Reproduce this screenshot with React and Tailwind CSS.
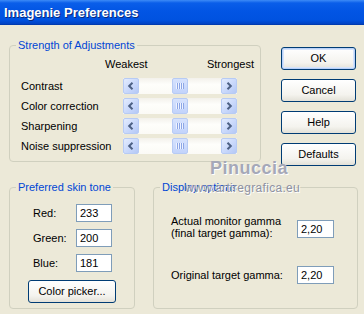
import React from "react";

function Arrow({ dir }) {
  return (
    <div className="w-[16px] h-[16px] rounded-[2px] border border-[#B7CBF4] bg-[linear-gradient(135deg,#E3ECFE_0%,#C6D6FB_60%,#B4C8F5_100%)] flex items-center justify-center">
      <svg width="8" height="8" viewBox="0 0 8 8">
        <path
          d={dir === "left" ? "M5.5 0.8 L2.2 4 L5.5 7.2" : "M2.5 0.8 L5.8 4 L2.5 7.2"}
          stroke="#4D6185"
          strokeWidth="2"
          fill="none"
        />
      </svg>
    </div>
  );
}

function Thumb() {
  return (
    <div className="w-[16px] h-[16px] rounded-[2px] border border-[#B7CBF4] bg-[linear-gradient(to_bottom,#D6E2FD,#C2D3FB)] flex items-center justify-center">
      <svg width="8" height="8" viewBox="0 0 8 8">
        <path d="M0.5 1 V7 M2.5 1 V7 M4.5 1 V7 M6.5 1 V7" stroke="#EEF3FF" strokeWidth="1" />
        <path d="M1.5 1 V7 M3.5 1 V7 M5.5 1 V7 M7.5 1 V7" stroke="#8CA6E6" strokeWidth="1" />
      </svg>
    </div>
  );
}

function Scroll() {
  return (
    <div className="w-[114px] h-[16px] flex justify-between bg-[linear-gradient(to_bottom,#F3F1EB,#FEFEFB_40%,#FBFAF6)]">
      <Arrow dir="left" />
      <Thumb />
      <Arrow dir="right" />
    </div>
  );
}

function Button({ children, def, className = "" }) {
  return (
    <div
      className={
        "h-[23px] rounded-[3px] border border-[#003C74] bg-[linear-gradient(to_bottom,#FFFFFF,#F4F3EE_70%,#E3E1D8)] flex items-center justify-center text-[11px] text-black " +
        (def ? "shadow-[inset_0_0_0_1px_#B9D1F8,inset_0_0_0_2px_#D6E4FB] " : "") +
        className
      }
    >
      {children}
    </div>
  );
}

function Input({ value, w = "w-[36px]" }) {
  return (
    <div className={w + " h-[18px] border border-[#7F9DB9] bg-white pl-[3px] flex items-center text-[11px] text-black"}>
      {value}
    </div>
  );
}

const fieldset = "border border-[#D0D0BF] rounded-[4px] m-0 p-0 min-w-0";
const legend = "ml-[6px] px-[2px] text-[11px] leading-[12px] text-[#0046D5]";

export default function App() {
  return (
    <div className="relative w-[364px] h-[314px] overflow-hidden bg-[#ECE9D8] font-['Liberation_Sans',Arial,sans-serif] text-[11px] text-black">
      {/* Title bar */}
      <div className="h-[25px] bg-[linear-gradient(to_bottom,#3D8BF7_0%,#0A5EE9_12%,#0255E4_45%,#0052E0_80%,#0142C2_96%,#00339E_100%)] flex items-center pl-[4px]">
        <span className="text-white font-bold text-[13px] [text-shadow:1px_1px_0_#0A2A7A]">Imagenie Preferences</span>
      </div>

      {/* Row 1 */}
      <div className="flex items-start pl-[9px] pt-[14px]">
        <fieldset className={fieldset + " w-[252px] pb-[7px]"}>
          <legend className={legend}>Strength of Adjustments</legend>
          <div className="mt-[7px] h-[13px] leading-[13px] flex justify-between pl-[95px] pr-[6px]">
            <span>Weakest</span>
            <span>Strongest</span>
          </div>
          <div className="mt-[7px] flex flex-col gap-[4px] pl-[11px]">
            {["Contrast", "Color correction", "Sharpening", "Noise suppression"].map((l) => (
              <div key={l} className="flex items-center h-[16px]">
                <span className="w-[102px]">{l}</span>
                <Scroll />
              </div>
            ))}
          </div>
        </fieldset>
        <div className="ml-[20px] mt-[8px] w-[75px] flex flex-col gap-[9px]">
          <Button def>OK</Button>
          <Button>Cancel</Button>
          <Button>Help</Button>
          <Button>Defaults</Button>
        </div>
      </div>

      {/* Row 2 */}
      <div className="flex items-start pl-[9px] mt-[15px]">
        <fieldset className={fieldset + " w-[126px] h-[128px]"}>
          <legend className={legend}>Preferred skin tone</legend>
          <div className="mt-[11px] flex flex-col gap-[7px] pl-[23px]">
            {[
              ["Red:", "233"],
              ["Green:", "200"],
              ["Blue:", "181"],
            ].map(([l, v]) => (
              <div key={l} className="flex items-center h-[18px]">
                <span className="w-[43px]">{l}</span>
                <Input value={v} />
              </div>
            ))}
          </div>
          <div className="mt-[8px] pl-[18px]">
            <Button className="w-[88px]">Color picker...</Button>
          </div>
        </fieldset>

        <fieldset className={fieldset + " ml-[18px] w-[205px] h-[128px]"}>
          <legend className={legend}>Display options</legend>
          <div className="mt-[22px] flex justify-between items-start pl-[17px] pr-[23px]">
            <div className="leading-[12px]">
              Actual monitor gamma
              <br />
              (final target gamma):
            </div>
            <div className="mt-[5px]">
              <Input value="2,20" w="w-[37px]" />
            </div>
          </div>
          <div className="mt-[27px] flex justify-between items-center h-[18px] pl-[17px] pr-[23px]">
            <span>Original target gamma:</span>
            <Input value="2,20" w="w-[37px]" />
          </div>
        </fieldset>
      </div>

      {/* Watermark */}
      <div className="absolute left-[210px] top-[158px] text-[18px] font-bold leading-[20px] tracking-[0.5px] text-[#A5A8B8] [text-shadow:1px_1px_0_#FFFFFF] pointer-events-none">
        Pinuccia
      </div>
      <div className="absolute right-[64px] top-[182px] text-[12px] leading-[13px] tracking-[0.3px] text-[#8E92A2] [text-shadow:1px_1px_0_#FFFFFF] pointer-events-none">
        www.artiregrafica.eu
      </div>
    </div>
  );
}
